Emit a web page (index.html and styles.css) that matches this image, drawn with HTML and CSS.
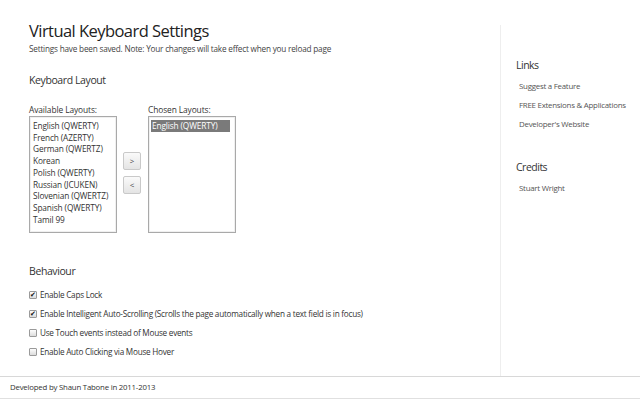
FILE: index.html
```html
<!DOCTYPE html>
<html>
<head>
<meta charset="utf-8">
<link rel="stylesheet" href="styles.css">
</head>
<body>
<div class="page">
  <div class="main">
    <h1 class="title">Virtual Keyboard Settings</h1>
    <p class="note">Settings have been saved. Note: Your changes will take effect when you reload page</p>
    <h2 class="section">Keyboard Layout</h2>
    <div class="layouts">
      <div class="col">
        <div class="label">Available Layouts:</div>
        <div class="listbox">
          <div class="opt">English (QWERTY)</div>
          <div class="opt">French (AZERTY)</div>
          <div class="opt">German (QWERTZ)</div>
          <div class="opt">Korean</div>
          <div class="opt">Polish (QWERTY)</div>
          <div class="opt">Russian (JCUKEN)</div>
          <div class="opt">Slovenian (QWERTZ)</div>
          <div class="opt">Spanish (QWERTY)</div>
          <div class="opt">Tamil 99</div>
        </div>
      </div>
      <div class="buttons">
        <div class="btn">&gt;</div>
        <div class="btn">&lt;</div>
      </div>
      <div class="col">
        <div class="label">Chosen Layouts:</div>
        <div class="listbox">
          <div class="opt selected">English (QWERTY)</div>
        </div>
      </div>
    </div>
    <h2 class="section behaviour">Behaviour</h2>
    <div class="checks">
      <div class="check"><span class="box on">&#10004;</span>Enable Caps Lock</div>
      <div class="check"><span class="box on">&#10004;</span>Enable Intelligent Auto-Scrolling (Scrolls the page automatically when a text field is in focus)</div>
      <div class="check"><span class="box"></span>Use Touch events instead of Mouse events</div>
      <div class="check"><span class="box"></span>Enable Auto Clicking via Mouse Hover</div>
    </div>
  </div>
  <div class="sidebar">
    <h2 class="side-title">Links</h2>
    <div class="side-link">Suggest a Feature</div>
    <div class="side-link">FREE Extensions &amp; Applications</div>
    <div class="side-link">Developer's Website</div>
    <h2 class="side-title credits">Credits</h2>
    <div class="side-link">Stuart Wright</div>
  </div>
</div>
<div class="footer">Developed by Shaun Tabone in 2011-2013</div>
</body>
</html>
```

FILE: styles.css
```css
html, body {
  margin: 0;
  padding: 0;
  background: #fff;
}
body {
  font-family: "Open Sans", "DejaVu Sans", sans-serif;
  color: #333;
  width: 640px;
  height: 400px;
  overflow: hidden;
}
.page {
  display: flex;
  height: 377px;
  border-bottom: 1px solid #d8d8d8;
  box-sizing: border-box;
}
.main {
  width: 500px;
  box-sizing: border-box;
  padding: 20px 0 0 29px;
}
.title {
  margin: 0;
  font-size: 16.5px;
  font-weight: 400;
  letter-spacing: -0.55px;
  color: #222;
  line-height: 22px;
}
.note {
  margin: 1px 0 0 0;
  font-size: 8.2px;
  letter-spacing: -0.2px;
  line-height: 12px;
  color: #444;
}
.section {
  margin: 16px 0 0 0;
  font-size: 10.5px;
  font-weight: 400;
  letter-spacing: -0.4px;
  color: #333;
  line-height: 18px;
}
.layouts {
  display: flex;
  align-items: flex-start;
  margin-top: 15px;
}
.col {
  display: flex;
  flex-direction: column;
}
.label {
  font-size: 8.4px;
  letter-spacing: -0.1px;
  line-height: 12px;
  color: #333;
}
.listbox {
  width: 88px;
  height: 117px;
  box-sizing: border-box;
  border: 1px solid #a9a9a9;
  padding: 3px 2px;
  box-shadow: inset 0 0 0 1px #f0f0f0;
}
.opt {
  font-size: 8.3px;
  letter-spacing: -0.13px;
  line-height: 11.7px;
  color: #333;
  white-space: nowrap;
  padding-left: 1px;
}
.opt.selected {
  background: #7a7a7a;
  color: #fff;
  width: 79px;
  box-sizing: border-box;
}
.buttons {
  display: flex;
  flex-direction: column;
  gap: 6px;
  margin: 48px 7px 0 6px;
}
.btn {
  width: 18px;
  height: 18px;
  box-sizing: border-box;
  border: 1px solid #c9c9c9;
  border-radius: 2px;
  background: linear-gradient(#fafafa, #e4e4e4);
  font-size: 8px;
  line-height: 16px;
  text-align: center;
  color: #444;
}
.behaviour {
  margin-top: 29px;
}
.checks {
  margin-top: 5px;
  display: flex;
  flex-direction: column;
}
.check {
  display: flex;
  align-items: center;
  height: 19px;
  font-size: 8.2px;
  letter-spacing: -0.25px;
  color: #333;
  white-space: nowrap;
}
.box {
  width: 8px;
  height: 8px;
  box-sizing: border-box;
  border: 1px solid #9a9a9a;
  border-radius: 1px;
  background: linear-gradient(#fdfdfd, #dcdcdc);
  margin-right: 3px;
  font-size: 7px;
  font-weight: 700;
  line-height: 6px;
  text-align: center;
  color: #111;
  overflow: hidden;
  letter-spacing: 0;
}
.sidebar {
  flex: 1;
  margin-top: 25px;
  border-left: 1px solid #eeeeee;
  padding: 31px 0 0 15px;
}
.side-title {
  margin: 0;
  font-size: 10.5px;
  font-weight: 400;
  letter-spacing: -0.5px;
  line-height: 18px;
  color: #333;
}
.side-link {
  font-size: 7.9px;
  letter-spacing: -0.25px;
  line-height: 19px;
  color: #555;
  padding-left: 3px;
}
.side-title + .side-link {
  margin-top: 3px;
}
.credits {
  margin-top: 24px;
}
.footer {
  height: 22px;
  box-sizing: border-box;
  border-bottom: 1px solid #e0e0e0;
  padding-left: 10px;
  font-size: 7.8px;
  letter-spacing: -0.2px;
  line-height: 21px;
  color: #333;
}
```
